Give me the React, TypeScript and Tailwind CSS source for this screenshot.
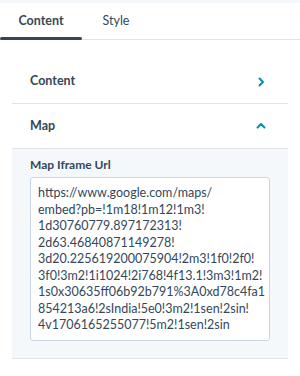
import React from 'react';

const urlLines = [
  'https://www.google.com/maps/',
  'embed?pb=!1m18!1m12!1m3!',
  '1d30760779.897172313!',
  '2d63.46840871149278!',
  '3d20.225619200075904!2m3!1f0!2f0!',
  '3f0!3m2!1i1024!2i768!4f13.1!3m3!1m2!',
  '1s0x30635ff06b92b791%3A0xd78c4fa1',
  '854213a6!2sIndia!5e0!3m2!1sen!2sin!',
  '4v1706165255077!5m2!1sen!2sin'
];

function ChevronRight() {
  return (
    <svg width="10" height="10" viewBox="0 0 10 10" fill="none">
      <polyline points="3.5,1.5 7,5 3.5,8.5" stroke="#0091ae" strokeWidth="2" strokeLinecap="round" strokeLinejoin="round" />
    </svg>
  );
}

function ChevronUp() {
  return (
    <svg width="10" height="10" viewBox="0 0 10 10" fill="none">
      <polyline points="1.5,6.5 5,3 8.5,6.5" stroke="#0091ae" strokeWidth="2" strokeLinecap="round" strokeLinejoin="round" />
    </svg>
  );
}

export default function App() {
  return (
    <div className="w-[300px] h-[376px] bg-white text-[#33475b] font-['Lato',sans-serif] overflow-hidden">
      <div className="h-[3px] bg-[#f5f8fa]" />

      {/* tabs */}
      <div className="flex h-[37px] border-b border-[#dfe3eb]">
        <div className="relative w-[82px] flex items-center justify-center text-[12.5px] font-bold">
          Content
          <div className="absolute left-0 right-0 bottom-[-1px] h-[3px] bg-[#33475b] rounded-full" />
        </div>
        <div className="w-[68px] flex items-center justify-center text-[12.5px]">
          Style
        </div>
      </div>

      <div className="mx-3 mt-5">
        <div className="h-[44px] flex items-center justify-between pl-[18px] pr-[22px] border-b border-[#dfe3eb]">
          <span className="text-[12.5px] font-bold">Content</span>
          <ChevronRight />
        </div>
        <div className="h-[45px] flex items-center justify-between pl-[18px] pr-[22px] border-b border-[#dfe3eb]">
          <span className="text-[12.5px] font-bold">Map</span>
          <ChevronUp />
        </div>

        <div className="bg-[#f5f8fa] px-[18px] pt-[8px] pb-[17px] border-b border-[#dfe3eb]">
          <div className="text-[12px] font-bold leading-4 mb-[4px]">Map Iframe Url</div>
          <div className="bg-white border border-[#cbd6e2] rounded-[3px] px-[7px] pt-[7px] pb-[6px] text-[12.5px] leading-[16.5px] text-[#33475b]">
            {urlLines.map((l) => (
              <div key={l} className="whitespace-nowrap">{l}</div>
            ))}
          </div>
        </div>
      </div>
    </div>
  );
}
